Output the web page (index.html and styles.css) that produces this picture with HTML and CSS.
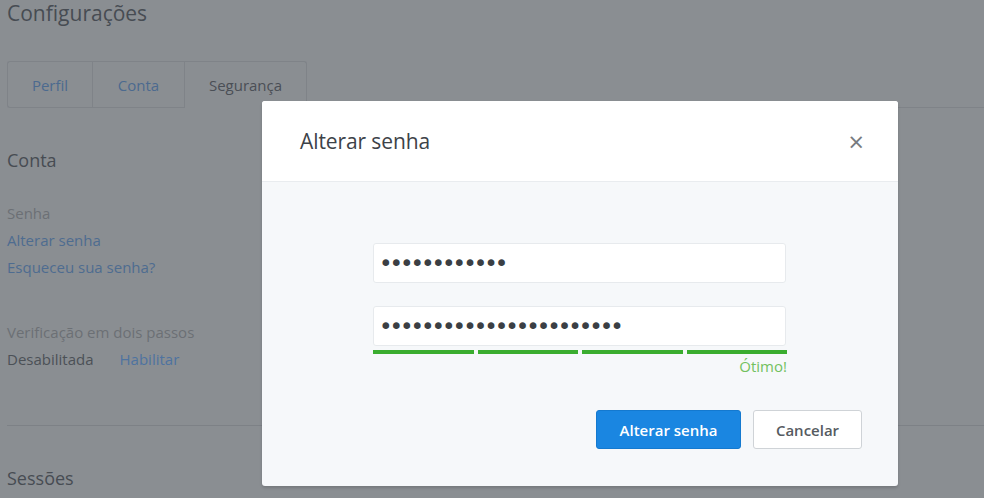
FILE: index.html
```html
<!DOCTYPE html>
<html lang="pt">
<head>
<meta charset="utf-8">
<title>Configurações</title>
<link rel="stylesheet" href="styles.css">
</head>
<body>
<div class="page">
  <h1 class="title">Configurações</h1>
  <div class="tabs">
    <a class="tab">Perfil</a>
    <a class="tab">Conta</a>
    <span class="tab active">Segurança</span>
    <span class="tab-rest"></span>
  </div>
  <h2 class="section">Conta</h2>
  <div class="group">
    <div class="label">Senha</div>
    <a class="link">Alterar senha</a>
    <a class="link">Esqueceu sua senha?</a>
  </div>
  <div class="group two">
    <div class="label">Verificação em dois passos</div>
    <div class="row"><span class="value">Desabilitada</span><a class="link blue">Habilitar</a></div>
  </div>
  <hr class="divider">
  <h2 class="section sessions">Sessões</h2>
</div>

<div class="modal">
  <div class="modal-header">
    <span class="modal-title">Alterar senha</span>
    <span class="close">&times;</span>
  </div>
  <div class="modal-body">
    <div class="fields">
      <input class="field" type="password" value="abcdefghijkl" readonly>
      <input class="field second" type="password" value="abcdefghijklmnopqrstuvw" readonly>
      <div class="strength"><span></span><span></span><span></span><span></span></div>
      <div class="strength-label">Ótimo!</div>
    </div>
    <div class="actions">
      <button class="btn primary">Alterar senha</button>
      <button class="btn">Cancelar</button>
    </div>
  </div>
</div>
</body>
</html>
```

FILE: styles.css
```css
html, body {
  margin: 0;
  padding: 0;
  height: 100%;
  overflow: hidden;
}
body {
  background: #8a8e92;
  font-family: "Open Sans", "Noto Sans", sans-serif;
  position: relative;
}
.page {
  padding-left: 7px;
}
.title {
  margin: 0;
  padding-top: 0;
  font-size: 21px;
  line-height: 26px;
  font-weight: 400;
  color: #474c53;
}
.tabs {
  display: flex;
  margin-top: 35px;
  height: 47px;
}
.tab {
  box-sizing: border-box;
  height: 47px;
  display: flex;
  align-items: center;
  justify-content: center;
  font-size: 15px;
  color: #4c6a8f;
  border: 1px solid #7f8388;
  border-right: none;
}
.tab:first-child {
  width: 85px;
  border-radius: 3px 0 0 3px;
}
.tab:nth-child(2) {
  width: 92px;
}
.tab.active {
  width: 123px;
  color: #4a4f56;
  border-right: 1px solid #7f8388;
  border-bottom: none;
  border-radius: 0 3px 0 0;
}
.tab-rest {
  flex: 1;
  border-bottom: 1px solid #7f8388;
}
.section {
  margin: 40px 0 0;
  font-size: 18px;
  line-height: 24px;
  font-weight: 400;
  color: #474c53;
}
.group {
  margin-top: 28px;
  font-size: 15px;
  line-height: 27px;
  display: flex;
  flex-direction: column;
}
.group.two {
  margin-top: 38px;
}
.label {
  color: #6c7075;
}
.link {
  color: #4e6c90;
}
.link.blue {
  color: #4e73a0;
}
.row {
  display: flex;
  gap: 26px;
}
.value {
  color: #4c5157;
}
.divider {
  margin: 52px 0 0;
  border: none;
  border-top: 1px solid #7d8186;
}
.sessions {
  margin-top: 40px;
}

/* modal */
.modal {
  position: absolute;
  left: 262px;
  top: 101px;
  width: 636px;
  height: 385px;
  background: #f6f8fa;
  border-radius: 3px;
  box-shadow: 0 2px 3px rgba(0,0,0,0.15);
  display: flex;
  flex-direction: column;
  overflow: hidden;
}
.modal-header {
  box-sizing: border-box;
  height: 81px;
  background: #ffffff;
  border-bottom: 1px solid #e9ecef;
  display: flex;
  align-items: center;
  justify-content: space-between;
  padding: 0 34px 0 38px;
}
.modal-title {
  font-size: 21px;
  color: #3d4248;
  letter-spacing: -0.1px;
}
.close {
  font-size: 27px;
  color: #777b80;
  line-height: 1;
  font-family: "Open Sans", sans-serif;
}
.modal-body {
  flex: 1;
  display: flex;
  flex-direction: column;
  padding: 61px 36px 0 111px;
}
.fields {
  width: 414px;
  display: flex;
  flex-direction: column;
}
.field {
  box-sizing: border-box;
  width: 413px;
  height: 40px;
  margin: 0;
  padding: 0 0 0 5px;
  border: 1px solid #e7eaed;
  border-radius: 3px;
  background: #fff;
  font-family: "DejaVu Sans", sans-serif;
  font-size: 23px;
  letter-spacing: -3.05px;
  color: #3b3f44;
  outline: none;
}
.field.second {
  margin-top: 23px;
}
.strength {
  display: flex;
  gap: 4px;
  margin-top: 4px;
  height: 4px;
}
.strength span {
  flex: 1;
  background: #3aad2f;
}
.strength-label {
  text-align: right;
  font-size: 15px;
  line-height: 18px;
  color: #72c15e;
  margin-top: 3px;
}
.actions {
  display: flex;
  justify-content: flex-end;
  gap: 12px;
  margin-top: 35px;
}
.btn {
  box-sizing: border-box;
  height: 39px;
  width: 109px;
  font-family: "Open Sans", "Noto Sans", sans-serif;
  font-size: 15px;
  font-weight: 600;
  color: #565b61;
  background: #fff;
  border: 1px solid #cfd3d7;
  border-radius: 3px;
  padding: 0;
}
.btn.primary {
  width: 145px;
  background: #1a86e1;
  border-color: #1479cf;
  color: #ffffff;
}
```
